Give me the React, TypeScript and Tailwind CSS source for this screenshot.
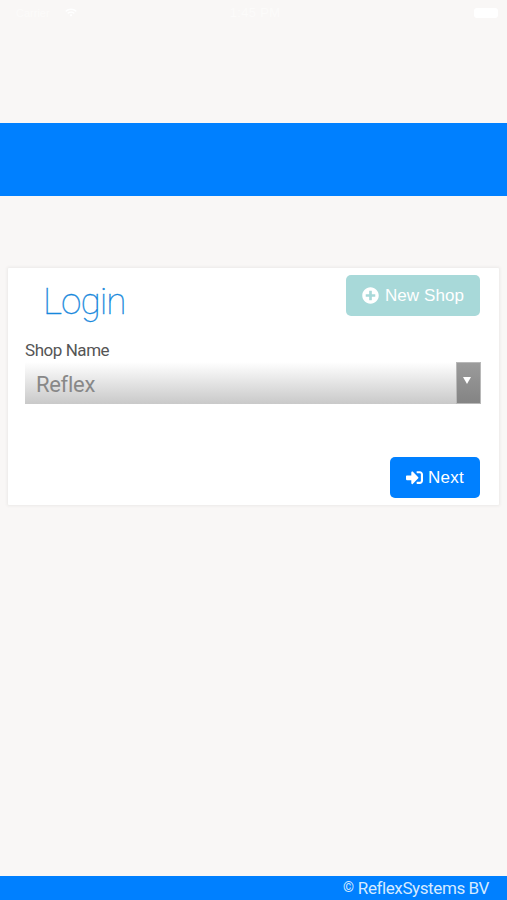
import { FaPlusCircle, FaSignInAlt, FaWifi } from 'react-icons/fa';

function StatusBar() {
  return (
    <div className="flex h-[123px] shrink-0 items-start justify-between pl-4 pr-[9px] pt-1 font-['Liberation_Sans',sans-serif] text-[13px] leading-[18px] text-[#fcfbfa]">
      <div className="flex w-40 items-center gap-[15px]">
        <span className="w-[33px] text-[11px]">Carrier</span>
        <FaWifi className="mb-0.5 h-[9px] w-[14px] text-white" />
      </div>
      <span className="mr-1 tracking-wide">1:45 PM</span>
      <div className="flex w-40 justify-end pt-1">
        <span className="h-[10px] w-6 rounded-[3px] bg-white" />
      </div>
    </div>
  );
}

export default function App() {
  return (
    <div className="flex h-[900px] w-full flex-col overflow-hidden bg-[#f9f7f6] font-[Roboto,sans-serif]">
      <StatusBar />
      <header className="h-[73px] shrink-0 bg-[#0080ff]" />

      <main className="flex-1 px-2 pt-[72px]">
        <section className="h-[237px] rounded-[1px] bg-white pl-[17px] pr-[18px] pt-[7px] shadow-[0_0_3px_1px_#ebe9e8]">
          <div className="flex h-[41px] items-start justify-between pl-[18px]">
            <h1 className="text-[37px] font-thin leading-[53px] tracking-[-1px] text-[#1688dc] [-webkit-text-stroke:0.3px_#1688dc]">
              Login
            </h1>
            <button
              type="button"
              className="mr-px flex h-[41px] w-[134px] items-center justify-center gap-[6px] rounded-[5px] bg-[#a8d9d9] font-['Liberation_Sans',sans-serif] text-[17px] text-white"
            >
              <FaPlusCircle className="size-[17px] shrink-0" />
              <span className="tracking-[0.1px]">New Shop</span>
            </button>
          </div>

          <label className="mt-[23px] block h-[23px] text-[17px] leading-[23px] tracking-[-0.45px] text-[#555]">
            Shop Name
          </label>
          <div className="flex h-[42px] bg-linear-to-b from-white to-[#c9c9c9]">
            <span className="flex-1 pl-[11px] text-[22px] leading-[45px] tracking-[-0.3px] text-[#888]">Reflex</span>
            <span className="flex w-[25px] items-start justify-center border border-[#b8b8b8] bg-linear-to-b from-[#9b9b9b] to-[#848484] pr-1 pt-[14px]">
              <svg viewBox="0 0 8 7" className="h-[7px] w-2 fill-white">
                <path d="M0 0h8L4 7z" />
              </svg>
            </span>
          </div>

          <div className="mt-[53px] flex justify-end">
            <button
              type="button"
              className="mr-px flex h-[41px] w-[90px] items-center justify-center gap-[5px] rounded-[5px] bg-[#0080ff] font-['Liberation_Sans',sans-serif] text-[17px] text-white"
            >
              <FaSignInAlt className="size-[17px] shrink-0" />
              <span className="tracking-[0.2px]">Next</span>
            </button>
          </div>
        </section>
      </main>

      <footer className="flex h-6 shrink-0 items-center justify-end gap-1 bg-[#0080ff] pr-[18px] text-[17px] leading-6 tracking-[-0.2px] text-[#d5eaff]">
        <span className="pb-0.5 text-[14px]">©</span>
        <span className="tracking-[-0.4px]">ReflexSystems BV</span>
      </footer>
    </div>
  );
}
